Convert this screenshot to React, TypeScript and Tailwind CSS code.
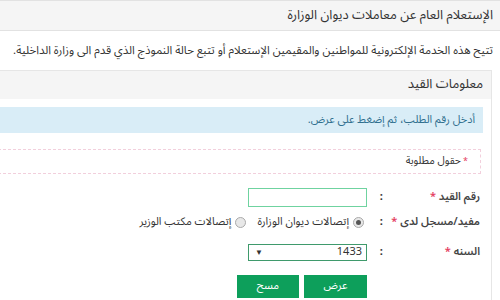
import { useState } from 'react';

export default function App() {
  const [source, setSource] = useState('diwan');

  return (
    <div
      dir="rtl"
      className="w-[500px] h-[300px] overflow-hidden bg-white text-[#333] font-['Noto_Sans_Arabic','Open_Sans',sans-serif]"
    >
      <div className="h-[31px] bg-[#f5f5f5] border-y border-[#e2e2e2] flex items-center pr-[7px] text-[13px]">
        الإستعلام العام عن معاملات ديوان الوزارة
      </div>

      <p className="h-[39px] flex items-center pr-[7px] text-[11.5px] whitespace-nowrap">
        تتيح هذه الخدمة الإلكترونية للمواطنين والمقيمين الإستعلام أو تتبع حالة النموذج الذي قدم الى وزارة الداخلية.
      </p>

      <div className="w-[560px] mr-[8px] border border-[#e6e6e6] h-[240px]">
        <div className="h-[28px] bg-[#f5f5f5] flex items-center pr-[8px] text-[13px]">
          معلومات القيد
        </div>

        <div className="pr-[8px]">
          <div className="mt-[8px] h-[26px] bg-[#d9edf7] text-[#31708f] flex items-center pr-[8px] text-[11px]">
            أدخل رقم الطلب، ثم إضغط على عرض.
          </div>

          <div className="mt-[16px] mr-[2px] h-[25px] border border-dashed border-[#f2cfdc] flex items-center pr-[12px] text-[10.5px]">
            <span className="text-[#e4405f] ml-[2px] text-[9px]">*</span>
            حقول مطلوبة
          </div>

          <div className="pr-[3px] mt-[13px] text-[11px]">
            <div className="flex items-center h-[20px]">
              <div className="w-[95px] font-semibold text-[#444] whitespace-nowrap">
                رقم القيد <span className="text-[#e4405f]">*</span>
              </div>
              <div className="w-[18px] font-bold pr-[2px]">:</div>
              <input className="w-[119px] h-[19px] border border-[#6fd3a0] outline-none px-1" />
            </div>

            <div className="flex items-center h-[21px] mt-[5px]">
              <div className="w-[95px] font-semibold text-[#444] whitespace-nowrap">
                مفيد/مسجل لدى <span className="text-[#e4405f]">*</span>
              </div>
              <div className="w-[21px] font-bold pr-[2px]">:</div>
              <label className="flex items-center gap-[4px] ml-[11px] whitespace-nowrap">
                <span
                  onClick={() => setSource('diwan')}
                  className="w-[11px] h-[11px] rounded-full border border-[#aaa] bg-[#e8e8e8] flex items-center justify-center"
                >
                  {source === 'diwan' && <span className="w-[5px] h-[5px] rounded-full bg-[#555]" />}
                </span>
                إتصالات ديوان الوزارة
              </label>
              <label className="flex items-center gap-[4px] whitespace-nowrap">
                <span
                  onClick={() => setSource('minister')}
                  className="w-[11px] h-[11px] rounded-full border border-[#aaa] bg-[#e8e8e8] flex items-center justify-center"
                >
                  {source === 'minister' && <span className="w-[5px] h-[5px] rounded-full bg-[#555]" />}
                </span>
                إتصالات مكتب الوزير
              </label>
            </div>

            <div className="flex items-center h-[21px] mt-[9px]">
              <div className="w-[95px] font-semibold text-[#444] whitespace-nowrap">
                السنه <span className="text-[#e4405f]">*</span>
              </div>
              <div className="w-[18px] font-bold pr-[2px]">:</div>
              <div className="w-[119px] h-[17px] border border-[#3f9a6c] flex items-center justify-between pr-[4px] pl-[6px] text-[11px]">
                <span>1433</span>
                <span className="text-[8px]">▼</span>
              </div>
            </div>

            <div className="flex gap-[5px] mt-[12px] mr-[113px]">
              <button className="w-[63px] h-[23px] bg-[#0d9f5b] text-white text-[11px]">عرض</button>
              <button className="w-[62px] h-[23px] bg-[#0d9f5b] text-white text-[11px]">مسح</button>
            </div>
          </div>
        </div>
      </div>
    </div>
  );
}
